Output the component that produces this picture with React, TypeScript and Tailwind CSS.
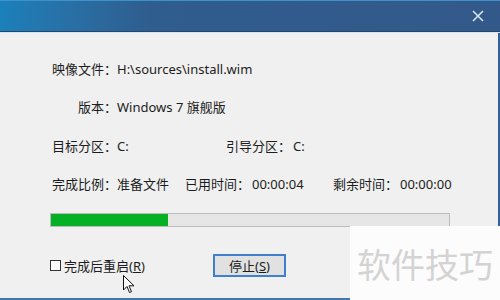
import React from "react";

export default function App() {
  return (
    <div className="relative w-[500px] h-[300px] overflow-hidden bg-[#f0f0f0] font-['Noto_Sans','Noto_Sans_CJK_SC',sans-serif] text-[13px] text-[#1c1c1c]">
      {/* title bar */}
      <div className="h-[32px] border-t border-[#3d92cc] border-b border-b-[#22466f] bg-gradient-to-r from-[#1b80ba] via-[#2f5d8e] via-30% to-[#33598a] flex items-center justify-end pr-[16px]">
        <svg width="12" height="12" viewBox="0 0 12 12">
          <path d="M1 1 L11 11 M11 1 L1 11" stroke="#d3e6f6" strokeWidth="1.6" fill="none" />
        </svg>
      </div>
      <div className="h-[1px] bg-[#d5e2ef]" />
      <div className="flex h-[265px]">
        <div className="flex-1 flex flex-col pl-[50px]">
          <div className="mt-[27px] h-[18px] flex items-center leading-[18px]">
            <span className="w-[67px] text-right">映像文件：</span>
            <span>H:\sources\install.wim</span>
          </div>
          <div className="mt-[20px] h-[18px] flex items-center leading-[18px]">
            <span className="w-[67px] text-right">版本：</span>
            <span>Windows 7 旗舰版</span>
          </div>
          <div className="mt-[21px] h-[18px] flex items-center leading-[18px]">
            <span className="w-[67px] text-right">目标分区：</span>
            <span className="w-[109px]">C:</span>
            <span className="w-[67px]">引导分区：</span>
            <span>C:</span>
          </div>
          <div className="mt-[20px] h-[18px] flex items-center leading-[18px]">
            <span className="w-[67px] text-right">完成比例：</span>
            <span className="w-[68px]">准备文件</span>
            <span className="w-[67px]">已用时间：</span>
            <span className="w-[81px]">00:00:04</span>
            <span className="w-[67px]">剩余时间：</span>
            <span>00:00:00</span>
          </div>
          <div className="mt-[20px] w-[400px] h-[14px] border border-[#bcbcbc] bg-[#e6e6e6] flex">
            <div className="w-[117px] h-full bg-[#06b025]" />
          </div>
          <div className="mt-[27px] h-[23px] flex items-center">
            <div className="w-[163px] flex items-center">
              <div className="w-[11px] h-[11px] border border-[#333] bg-white" />
              <span className="ml-[3px] leading-[18px]">
                完成后重启(<span className="underline">R</span>)
              </span>
            </div>
            <div className="w-[73px] h-[23px] border-2 border-[#3f7fcf] bg-[#e1e1e1] flex items-center justify-center leading-[18px]">
              停止(<span className="underline">S</span>)
            </div>
          </div>
        </div>
        <div className="w-[2px] bg-[#34609a]" />
      </div>
      <div className="h-[2px] bg-[#4677a8]" />

      {/* mouse cursor */}
      <svg className="absolute left-[123px] top-[275px]" width="13" height="19" viewBox="0 0 13 19">
        <path d="M0.5 0.5 L0.5 15 L4 11.5 L6.5 17.5 L8.5 16.7 L6 10.8 L11 10.8 Z" fill="#fff" stroke="#111" strokeWidth="1" strokeLinejoin="miter" />
      </svg>

      {/* watermark */}
      <div className="absolute left-[350px] top-[226px] w-[150px] h-[74px] bg-[#fcfcfc] flex items-center justify-center">
        <span className="text-[34px] leading-none text-[#d3d3d3] font-['Noto_Sans_CJK_SC',sans-serif] mt-[2px]">软件技巧</span>
      </div>
    </div>
  );
}
